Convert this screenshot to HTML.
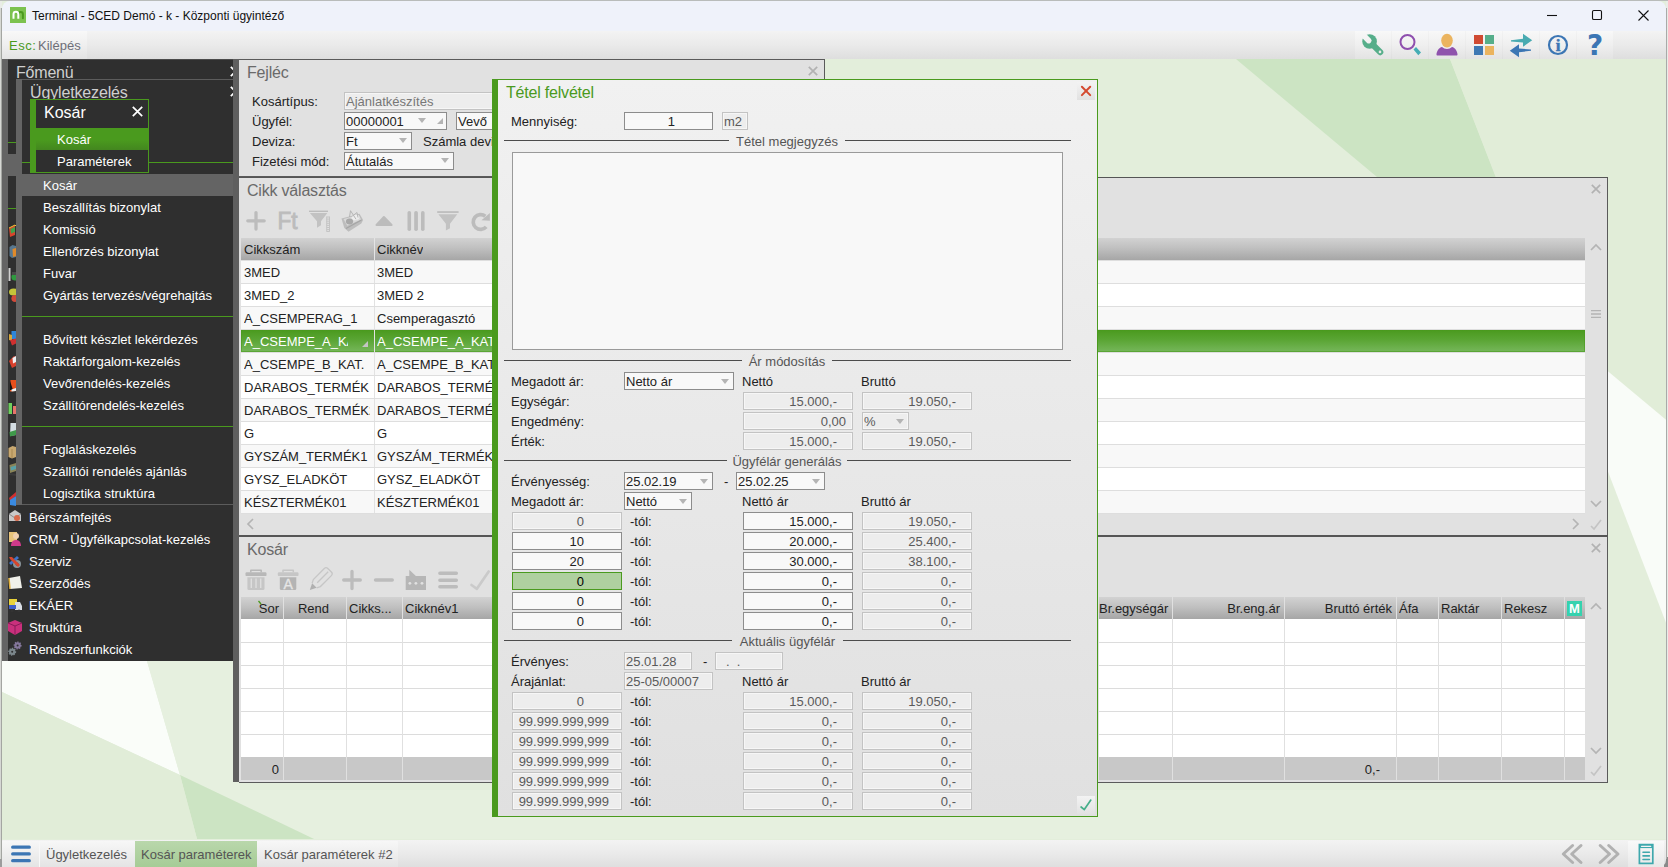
<!DOCTYPE html>
<html lang="hu"><head><meta charset="utf-8"><title>Terminal - 5CED Demó</title>
<style>
html,body{margin:0;padding:0}
body{width:1668px;height:867px;position:relative;overflow:hidden;background:#e9ece7;font-family:"Liberation Sans",sans-serif;font-size:13px;color:#222;}
div,span{box-sizing:border-box}
.a{position:absolute}
.t{position:absolute;white-space:nowrap;height:20px;line-height:20px}
.title{position:absolute;left:2px;top:1px;width:1664px;height:30px;background:#eff2fa;border-radius:8px 8px 0 0}
.tbar{position:absolute;left:2px;top:31px;width:1664px;height:28px;background:linear-gradient(#f3f3f3,#eaeaea 50%,#dedede)}
.bbar{position:absolute;left:2px;top:840px;width:1664px;height:27px;border-radius:0 0 7px 7px;background:linear-gradient(#f3f3f3,#eaeaea 50%,#dfdfdf)}
.menu{position:absolute;background:#2f2f2f}
.mi{position:absolute;white-space:nowrap;color:#fff;height:22px;line-height:24px;font-size:13px}
.panel{position:absolute;background:#e1e1e1}
.ph{position:absolute;letter-spacing:-0.2px;font-size:16px;color:#6a6a6a;white-space:nowrap;height:20px;line-height:20px}
.f{position:absolute;height:18px;line-height:18px;white-space:nowrap;overflow:hidden;font-size:13px}
.fe{background:#f8f8f8;border:1px solid #8c8c8c;color:#222}
.fd{background:#ededed;border:1px solid #c3c3c3;color:#5a5a5a;box-shadow:inset 0 0 0 1px #f6f6f6}
.fa{background:#afd09f;border:1px solid #4a9a1e;color:#000}
.r{text-align:right}
.arr{position:absolute;width:0;height:0;margin-left:-0.5px;border-left:4.5px solid transparent;border-right:4.5px solid transparent;border-top:5px solid #b4b4b4}
.th{position:absolute;height:22px;line-height:22px;white-space:nowrap;overflow:hidden;color:#222;font-size:13px}
.sep{position:absolute;height:1px;background:#4c4c4c}
.sl{position:absolute;white-space:nowrap;height:20px;line-height:20px;color:#555;font-size:13px;text-align:center}
</style></head>
<body>
<div class="a" style="left:0;top:0;width:1668px;height:1px;background:#b9bcba"></div>
<svg class="a" style="left:2px;top:1px" width="1664" height="866" viewBox="2 1 1664 866">
<rect x="0" y="0" width="1668" height="867" fill="#e3eedb"/>
<polygon points="1236,59 1450,59 1496,177 1377,177" fill="#cce4c3"/>
<polygon points="1450,59 1668,59 1668,622" fill="#e1edd8"/>
<polygon points="1607,370.500 1668,421.500 1668,628 1607,469" fill="#f9fcf8"/>
<polygon points="2,661 147,661 180,775 2,692" fill="#fafdf9"/>
<polygon points="147,661 240,661 240,790 1668,790 1668,839 314,839 180,775" fill="#e6f0df"/>
<polygon points="180,775 314,839 197,839" fill="#cce4c3"/>
<polygon points="2,692 180,775 197,839 2,839" fill="#e1edd8"/>
</svg>
<div class="a" style="left:0;top:857px;width:12px;height:10px;background:#9c9c9c"></div><div class="a" style="left:1656px;top:857px;width:12px;height:10px;background:#8a8a8a"></div>
<div class="title">
<svg class="a" style="left:8px;top:6px" width="16" height="16" viewBox="0 0 16 16"><rect width="16" height="16" fill="#7cc24f"/><path d="M8.300 7.400a2.300 2.300 0 0 1 4.600 0V11.300" fill="none" stroke="#4a9a1e" stroke-width="2" stroke-linecap="round"/><path d="M3.500 11.800V7.200a2.400 2.400 0 0 1 4.800 0V11.800" fill="none" stroke="#fff" stroke-width="2"/></svg>
<div class="a" id="ttl" style="left:30px;top:6px;height:18px;line-height:18px;font-size:12px;color:#111;white-space:nowrap;letter-spacing:0px">Terminal - 5CED Demó - k - Központi ügyintéző</div>
<svg class="a" style="left:1540px;top:0" width="124" height="30" viewBox="1542 1 124 30" fill="none" stroke="#111" stroke-width="1.1"><path d="M1547 15.500h10"/><rect x="1592.5" y="10.5" width="9" height="9" rx="1.3"/><path d="M1638.5 10.5l10 10M1648.5 10.5l-10 10"/></svg>
</div>
<div class="tbar">
<div class="a" style="left:0;top:0;width:85px;height:28px;background:linear-gradient(#f8f8f8,#efefef 50%,#e3e3e3)"></div>
<div class="a" style="left:7px;top:5px;height:20px;line-height:20px;font-size:13px;letter-spacing:0.5px;color:#4a9a1e;white-space:nowrap">Esc:</div>
<div class="a" style="left:36px;top:5px;height:20px;line-height:20px;font-size:13px;color:#6e6e78;white-space:nowrap">Kilépés</div>
<div class="a" style="left:1353px;top:0;width:36px;height:28px;background:linear-gradient(#f8f8f8,#efefef 50%,#e3e3e3)"></div>
<div class="a" style="left:1390px;top:0;width:36px;height:28px;background:linear-gradient(#f8f8f8,#efefef 50%,#e3e3e3)"></div>
<div class="a" style="left:1427px;top:0;width:36px;height:28px;background:linear-gradient(#f8f8f8,#efefef 50%,#e3e3e3)"></div>
<div class="a" style="left:1464px;top:0;width:36px;height:28px;background:linear-gradient(#f8f8f8,#efefef 50%,#e3e3e3)"></div>
<div class="a" style="left:1501px;top:0;width:36px;height:28px;background:linear-gradient(#f8f8f8,#efefef 50%,#e3e3e3)"></div>
<div class="a" style="left:1538px;top:0;width:36px;height:28px;background:linear-gradient(#f8f8f8,#efefef 50%,#e3e3e3)"></div>
<div class="a" style="left:1575px;top:0;width:36px;height:28px;background:linear-gradient(#f8f8f8,#efefef 50%,#e3e3e3)"></div>
<svg class="a" style="left:1353px;top:0" width="260" height="28" viewBox="1355 31 260 28">
<mask id="wm" maskUnits="userSpaceOnUse" x="1355" y="31" width="40" height="28"><rect x="1355" y="31" width="40" height="28" fill="#fff"/><rect x="-2.800" y="-12" width="5.600" height="13.500" rx="2.600" transform="translate(1369.600 41.500) rotate(-45)" fill="#000"/><circle cx="1380" cy="51.900" r="1.300" fill="#000"/></mask>
<g mask="url(#wm)" fill="#56ae8a" stroke="#56ae8a"><circle cx="1369.600" cy="41.500" r="7.300" stroke="none"/><path d="M1370.500 42.400L1380.200 52.100" stroke-width="6.200" stroke-linecap="round"/></g>
<circle cx="1407.500" cy="42" r="7" fill="none" stroke="#8f4fae" stroke-width="2"/>
<path d="M1413.500 49.500l2.500-2.500 5 5.500-2.700 2.700z" fill="#45adb5"/>
<ellipse cx="1447" cy="40.600" rx="5.800" ry="6.800" fill="#ebb45f"/>
<path d="M1436.500 54.500c0-3 2.500-7 5.500-7.500 1.500 1.200 3 2 5 2s3.500-.8 5-2c3 .5 5.500 4.500 5.500 7.500 0 .6-.4 1-1 1h-19c-.6 0-1-.4-1-1z" fill="#8f52ad"/>
<rect x="1474" y="35" width="9" height="9" fill="#d04a31"/><rect x="1485" y="35" width="9" height="9" fill="#56ae8a"/><rect x="1474" y="46" width="9" height="9" fill="#3e78b3"/><rect x="1485" y="46" width="9" height="9" fill="#ebb45f"/>
<path d="M1511 40.200l12-1.400v-5l9.200 6.500-9.200 6.500v-4.200l-12 -1.200z" fill="#49abb1"/>
<path d="M1531 50.800l-12 1.400v5l-9.200-6.500 9.200-6.500v4.200l12 1.200z" fill="#3c76b4"/>
<circle cx="1558" cy="45" r="9" fill="none" stroke="#3c76b4" stroke-width="2.200"/>
<text x="1558" y="51" font-family="Liberation Serif,serif" font-weight="bold" font-size="17" fill="#3c76b4" stroke="#3c76b4" stroke-width="0.5" text-anchor="middle">i</text>
<text x="1595" y="55" font-family="DejaVu Sans,Liberation Sans,sans-serif" font-weight="bold" font-size="28" fill="#3c76b4" text-anchor="middle">?</text>
</svg>
</div>
<div class="bbar">
<div class="a" style="left:0;top:1px;width:396px;height:26px;background:linear-gradient(#f7f7f7,#eeeeee 50%,#e4e4e4)"></div>
<svg class="a" style="left:8px;top:5px" width="22" height="18" viewBox="0 0 22 18" stroke="#3c76b4" stroke-width="3.300" stroke-linecap="round"><path d="M2.700 2.200h16.600M2.700 8.900h16.600M2.700 15.700h16.600"/></svg>
<div class="a" style="left:37px;top:1px;width:1px;height:26px;background:#f8f8f8"></div>
<div class="a" style="left:133px;top:1px;width:122px;height:26px;background:linear-gradient(#b9d7ab,#a6cc96)"></div>
<div class="a" style="left:44px;top:5px;height:20px;line-height:20px;font-size:13px;color:#555;white-space:nowrap">Ügyletkezelés</div>
<div class="a" style="left:139px;top:5px;height:20px;line-height:20px;font-size:13px;color:#555;white-space:nowrap">Kosár paraméterek</div>
<div class="a" style="left:262px;top:5px;height:20px;line-height:20px;font-size:13px;color:#555;white-space:nowrap">Kosár paraméterek #2</div>
<div class="a" style="left:1626px;top:1px;width:36px;height:26px;background:linear-gradient(#f9f9f9,#f1f1f1 50%,#e8e8e8)"></div>
<svg class="a" style="left:1555px;top:-1px" width="109" height="28" viewBox="1557 839 109 28" fill="none"><g stroke="#b1b1b1" stroke-width="3" stroke-linecap="round" stroke-linejoin="round"><path d="M1572.600 845.500l-9.300 8.500 9.300 8.500M1581 845.500l-9.300 8.500 9.300 8.500"/><path d="M1600.200 845.500l9.300 8.500-9.300 8.500M1608.700 845.500l9.300 8.500-9.300 8.500"/></g><g stroke="#3fa8ad"><rect x="1639.400" y="844.600" width="13.400" height="18.800" stroke-width="1.700"/><path d="M1639.400 846.300h13.400" stroke-width="3.600"/><path d="M1641.500 846.300h9.200" stroke="#f4f4f4" stroke-width="1.300" stroke-linecap="round"/><path d="M1643 852.300h6.400M1643 855.900h6.400M1643 859.500h6.400" stroke-width="1.600" stroke-linecap="round"/></g></svg>
</div>
<div class="menu" style="left:2px;top:59px;width:231px;height:602px;overflow:hidden">
<div class="a" style="left:0;top:0;width:231px;height:1px;background:#4a4a4a"></div>
<div class="a" style="left:0;top:0;width:6px;height:602px;background:#646464"></div>
<div class="a" style="left:0;top:95px;width:231px;height:22px;background:#646464"></div>
<div class="a" style="left:6px;top:83px;width:225px;height:1px;background:#4a9a1e"></div>
<div class="a" style="left:6px;top:149px;width:225px;height:1px;background:#4a9a1e"></div>
<div class="a" style="left:14px;top:4px;height:20px;line-height:20px;font-size:16px;letter-spacing:-0.2px;color:#cfcfcf;white-space:nowrap">Főmenü</div>
<svg class="a" style="left:228px;top:7px" width="11" height="11" viewBox="0 0 11 11"><path d="M0.8 0.8L10.2 10.2M10.2 0.8L0.800 10.2" stroke="#ffffff" stroke-width="1.7" fill="none"/></svg>
<svg class="a" style="left:6px;top:162px" width="8" height="290" viewBox="8 220 8 290">
<g><path d="M9 227l6-3v10l-5 2z" fill="#d8452c"/><path d="M10.500 228l4.500-2v5l-4 1.500z" fill="#3fa24a"/><path d="M9 227l6-3 1 1" stroke="#e8c83a" fill="none"/></g>
<g><path d="M9.500 246l3-2 3.500 1v11l-4 1-2.500-2z" fill="#587890"/><path d="M12.500 248l3.500-1v8l-3 1z" fill="#e08a2a"/></g>
<g><rect x="8.500" y="267" width="2" height="13" fill="#cfcfcf"/><circle cx="15" cy="276" r="3.600" fill="#2f9a3f"/><path d="M12 271h4v3h-4z" fill="#4a4a4a"/></g>
<g><ellipse cx="13.500" cy="291" rx="4.500" ry="3.600" fill="#c4c43a"/><ellipse cx="15" cy="297.500" rx="3.600" ry="3.400" fill="#d24a3a"/></g>
<g><rect x="11.500" y="330" width="4.500" height="8" fill="#2f86d8"/><path d="M9 333l3 1v6l-3-1z" fill="#d8a83a"/><path d="M10 339l6-1.500v5l-4 2z" fill="#d03030"/></g>
<g><path d="M9 360l5-5 2 1v9l-4 2z" fill="#d8402c"/><path d="M12.500 357l3.500-2v6l-3 1.500z" fill="#f0f0f4"/></g>
<g><path d="M10.500 379h5.500v11l-6 .5z" fill="#e8501c"/><path d="M10 380l3 9h-3z" fill="#111"/><path d="M11.500 388.500l4.500-1.500v3l-4.500 .5z" fill="#f2f2f2"/></g>
<g><rect x="8.500" y="402" width="3.500" height="11" fill="#6ed05e"/><rect x="13" y="405" width="3" height="8" fill="#e8746a"/></g>
<g><path d="M10.500 422h5.500v12l-6 1z" fill="#d4dde2"/><path d="M9.500 431l6.500-2v5l-6 1.500z" fill="#3f9a4a"/></g>
<g><path d="M8.500 447l4-2 3.500 1v10l-4 1.500-3.500-1.500z" fill="#c8a870"/><path d="M12 448v9" stroke="#a88850"/></g>
<g><path d="M9.500 464l6.500-2v8l-6 2z" fill="#8a8458"/><path d="M10.500 466l5.500-1.500v3.500l-5 1.500z" fill="#58a0a8"/><path d="M9 472l7 1v2l-7-1z" fill="#3a3a3a"/></g>
<g><path d="M9 497l7-6v4l-6 5z" fill="#d03030"/><path d="M10 499l6-4v10l-6 -1z" fill="#3a8ae0"/></g>
</svg>
<div class="mi" style="left:27px;top:447px">Bérszámfejtés</div>
<div class="mi" style="left:27px;top:469px">CRM - Ügyfélkapcsolat-kezelés</div>
<div class="mi" style="left:27px;top:491px">Szerviz</div>
<div class="mi" style="left:27px;top:513px">Szerződés</div>
<div class="mi" style="left:27px;top:535px">EKÁER</div>
<div class="mi" style="left:27px;top:557px">Struktúra</div>
<div class="mi" style="left:27px;top:579px">Rendszerfunkciók</div>
<svg class="a" style="left:6px;top:448px" width="18" height="154" viewBox="8 507 18 154">
<g><path d="M9 514l6-4 6 4v7H9z" fill="#c9c9c9"/><path d="M9 514l6 4 6-4" fill="none" stroke="#8a8a8a"/><circle cx="17" cy="518" r="3" fill="#d8694a"/></g>
<g><rect x="9" y="532" width="8" height="10" fill="#e8c37a"/><circle cx="16" cy="536" r="3" fill="#f0d0b0"/><path d="M11 546c0-4 2-6 5-6s5 2 5 6z" fill="#d03a8a"/></g>
<g><circle cx="17" cy="564" r="4" fill="#8a949a"/><circle cx="17" cy="564" r="1.500" fill="#2f2f2f"/><path d="M9 563l8-7 2 2-8 7z" fill="#3f74c8"/><path d="M9 557l3 0 8 8-2 2-8-8z" fill="#d8452c"/></g>
<g><path d="M9 578l11-2 2 12-12 1z" fill="#f0f0ea"/><path d="M9 578l1 11" stroke="#e0b040" stroke-width="1.500"/></g>
<g><rect x="9" y="599" width="8" height="7" fill="#e8d23a"/><path d="M15 602l5 0 2 4v4h-7z" fill="#d8dde4"/><rect x="9" y="605" width="7" height="4" fill="#3f5fc8"/><circle cx="12" cy="611" r="1.600" fill="#333"/><circle cx="19" cy="611" r="1.600" fill="#333"/></g>
<g><path d="M15 620l7 3v8l-7 4-7-4v-8z" fill="#c9307c"/><path d="M8 623l7 3 7-3M15 626v9" stroke="#8a1a58" fill="none"/></g>
<g><circle cx="17.600" cy="645.400" r="3.200" fill="#85789c" stroke="#85789c" stroke-width="1.600" stroke-dasharray="1.200 1.200"/><circle cx="17.600" cy="645.400" r="1" fill="#2f2f2f"/><circle cx="12.200" cy="651.700" r="3.200" fill="#7c878c" stroke="#7c878c" stroke-width="1.600" stroke-dasharray="1.200 1.200"/><circle cx="12.200" cy="651.700" r="1" fill="#2f2f2f"/></g>
</svg>
<div class="a" style="left:14px;top:20px;width:217px;height:426px;background:#2f2f2f;overflow:hidden">
<div class="a" style="left:0;top:0;width:217px;height:1px;background:#5c5c5c"></div>
<div class="a" style="left:0;top:425px;width:217px;height:1px;background:#5c5c5c"></div>
<div class="a" style="left:0;top:0;width:6px;height:426px;background:#646464"></div>
<div class="a" style="left:14px;top:4px;height:20px;line-height:20px;font-size:16px;letter-spacing:-0.15px;color:#cfcfcf;white-space:nowrap">Ügyletkezelés</div>
<svg class="a" style="left:214px;top:7px" width="11" height="11" viewBox="0 0 11 11"><path d="M0.8 0.8L10.2 10.2M10.2 0.8L0.800 10.2" stroke="#ffffff" stroke-width="1.7" fill="none"/></svg>
<div class="a" style="left:6px;top:83px;width:211px;height:1px;background:#4a9a1e"></div>
<div class="a" style="left:6px;top:237px;width:211px;height:1px;background:#4a9a1e"></div>
<div class="a" style="left:6px;top:347px;width:211px;height:1px;background:#4a9a1e"></div>
<div class="a" style="left:0;top:95px;width:217px;height:22px;background:#646464"></div>
<div class="mi" style="left:27px;top:95px">Kosár</div>
<div class="mi" style="left:27px;top:117px">Beszállítás bizonylat</div>
<div class="mi" style="left:27px;top:139px">Komissió</div>
<div class="mi" style="left:27px;top:161px">Ellenőrzés bizonylat</div>
<div class="mi" style="left:27px;top:183px">Fuvar</div>
<div class="mi" style="left:27px;top:205px">Gyártás tervezés/végrehajtás</div>
<div class="mi" style="left:27px;top:249px">Bővített készlet lekérdezés</div>
<div class="mi" style="left:27px;top:271px">Raktárforgalom-kezelés</div>
<div class="mi" style="left:27px;top:293px">Vevőrendelés-kezelés</div>
<div class="mi" style="left:27px;top:315px">Szállítórendelés-kezelés</div>
<div class="mi" style="left:27px;top:359px">Foglaláskezelés</div>
<div class="mi" style="left:27px;top:381px">Szállítói rendelés ajánlás</div>
<div class="mi" style="left:27px;top:403px">Logisztika struktúra</div>
<div class="a" style="left:14px;top:20px;width:119px;height:74px;background:#2f2f2f;border:1px solid #4a9a1e;overflow:hidden">
<div class="a" style="left:0;top:0;width:5px;height:72px;background:#4a9a1e"></div>
<div class="a" style="left:5px;top:28px;width:112px;height:22px;background:linear-gradient(#4a9a1e,#4a9a1e 55%,#43861f)"></div>
<div class="a" style="left:13px;top:3px;height:20px;line-height:20px;font-size:16px;color:#fff;white-space:nowrap">Kosár</div>
<svg class="a" style="left:101px;top:6px" width="11" height="11" viewBox="0 0 11 11"><path d="M0.8 0.8L10.2 10.2M10.2 0.8L0.800 10.2" stroke="#ffffff" stroke-width="1.7" fill="none"/></svg>
<div class="mi" style="left:26px;top:28px">Kosár</div>
<div class="mi" style="left:26px;top:50px">Paraméterek</div>
</div>
</div>
</div>
<div class="a" style="left:233px;top:59px;width:6px;height:723px;background:#5f5f5f"></div>
<div class="panel" style="left:239px;top:59px;width:586px;height:118px;border-top:1px solid #5a5a5a;border-right:1px solid #5a5a5a;border-bottom:1px solid #5a5a5a"></div>
<div class="ph" style="left:247px;top:63px">Fejléc</div>
<svg class="a" style="left:808px;top:66px" width="10" height="10" viewBox="0 0 10 10"><path d="M0.8 0.8L9.2 9.2M9.2 0.8L0.800 9.2" stroke="#b2b2b2" stroke-width="1.7" fill="none"/></svg>
<div class="t" style="left:252px;top:92px">Kosártípus:</div>
<div class="t" style="left:252px;top:112px">Ügyfél:</div>
<div class="t" style="left:252px;top:132px">Deviza:</div>
<div class="t" style="left:252px;top:152px">Fizetési mód:</div>
<div class="f fd" style="left:344px;top:92px;width:200px;padding-left:1px;color:#777">Ajánlatkészítés</div>
<div class="f fe" style="left:344px;top:112px;width:103px;padding-left:1px">00000001</div>
<div class="arr" style="left:418px;top:118px;border-top-color:#b4b4b4"></div>
<svg class="a" style="left:437px;top:118px" width="6" height="6"><path d="M6 0V6H0z" fill="#b4b4b4"/></svg>
<div class="f fe" style="left:456px;top:112px;width:60px;padding-left:1px">Vevő</div>
<div class="f fe" style="left:344px;top:132px;width:68px;padding-left:1px">Ft</div>
<div class="arr" style="left:399px;top:138px;border-top-color:#b4b4b4"></div>
<div class="t" style="left:423px;top:132px">Számla deviza</div>
<div class="f fe" style="left:344px;top:152px;width:110px;padding-left:1px">Átutalás</div>
<div class="arr" style="left:441px;top:158px;border-top-color:#b4b4b4"></div>
<div class="panel" style="left:239px;top:177px;width:1369px;height:358px;border-top:1px solid #555;border-right:1px solid #5a5a5a"></div>
<div class="ph" style="left:247px;top:181px">Cikk választás</div>
<svg class="a" style="left:1591px;top:184px" width="10" height="10" viewBox="0 0 10 10"><path d="M0.8 0.8L9.2 9.2M9.2 0.8L0.800 9.2" stroke="#b2b2b2" stroke-width="1.7" fill="none"/></svg>
<svg class="a" style="left:241px;top:206px" width="251" height="28" viewBox="241 206 251 28" fill="#bcbcbc" stroke="none">
<path d="M256 212.600v16.400M247.800 220.800h16.400" stroke="#bcbcbc" stroke-width="3.300" stroke-linecap="round" fill="none"/>
<text x="277.500" y="229" font-family="Liberation Sans,sans-serif" font-size="23" fill="#bcbcbc" stroke="#bcbcbc" stroke-width="0.900" textLength="20" lengthAdjust="spacingAndGlyphs">Ft</text>
<rect x="309" y="210.600" width="19" height="1.400"/>
<path d="M309.900 213h17.400l-6.300 8.300v4l-4 2.500v-6.500z" fill="#c2c2c2"/>
<path d="M326.700 216.500v15.200M329.500 216.500v15.200M326.700 217h2.800M326.700 219.100h2.800M326.700 221.200h2.800M326.700 223.300h2.800M326.700 225.400h2.800M326.700 227.500h2.800M326.700 229.600h2.800M326.700 231.500h2.800" stroke="#c4c4c4" stroke-width="1" fill="none"/>
<path d="M341.500 218.500l18-4.800 3.600 6.200-1.800 3.600-12.800 8.200-4.200-3.600z" fill="#bdbdbd"/>
<path d="M343.500 219l15-4 2.600 4.600-13.800 6.200z" fill="#d9d9d9"/>
<ellipse cx="355.500" cy="217.500" rx="4" ry="2.600" fill="#ededed" transform="rotate(-15 355.500 217.500)"/>
<ellipse cx="349.500" cy="221.500" rx="3.600" ry="3" fill="#a9a9a9"/>
<path d="M349.500 217l1-6.300 5.500 8.500M352.500 216l4.500-3.500 1 5" fill="none" stroke="#b5b5b5" stroke-width="1"/>
<path d="M346 228.500l15.500-8.500" stroke="#a5a5a5" stroke-width="1.200" fill="none"/>
<path d="M376.500 225l7.400-8 7.700 8z" stroke="#bcbcbc" stroke-width="2" stroke-linejoin="round"/>
<rect x="407.500" y="210.900" width="3.600" height="20.100" rx="1.800"/><rect x="414.200" y="210.900" width="3.700" height="20.100" rx="1.800"/><rect x="421" y="210.900" width="3.600" height="20.100" rx="1.800"/>
<rect x="437.200" y="211.200" width="21.400" height="1.700"/>
<path d="M438.400 214.200h18.900l-7.300 9.600v4.500l-4.100 2.100v-6.600z" fill="#c2c2c2"/>
<path d="M485.300 216.300a7.400 7.400 0 1 0 0.900 10.600" fill="none" stroke="#bcbcbc" stroke-width="3.700"/>
<path d="M489.900 213v7.800l-8.400 -.6z"/>
</svg>
<div class="a" style="left:241px;top:238px;width:1344px;height:22px;background:linear-gradient(#d2d2d2,#c0c0c0 45%,#a6a6a6)"></div>
<div class="a" style="left:374px;top:238px;width:1px;height:22px;background:#e4e4e4"></div>
<div class="th" style="left:244px;top:238px;line-height:24px">Cikkszám</div>
<div class="th" style="left:377px;top:238px;line-height:24px">Cikknév</div>
<div class="a" style="left:241px;top:260px;width:1344px;height:23px;background:#f8f8f8;border-top:1px solid #dedede"></div>
<div class="a" style="left:374px;top:261px;width:1px;height:22px;background:#e2e2e2"></div>
<div class="th" style="left:244px;top:261px;width:126px;color:#222;height:22px;line-height:23px">3MED</div>
<div class="th" style="left:377px;top:261px;width:200px;color:#222;height:22px;line-height:23px">3MED</div>
<div class="a" style="left:241px;top:283px;width:1344px;height:23px;background:#ffffff;border-top:1px solid #dedede"></div>
<div class="a" style="left:374px;top:284px;width:1px;height:22px;background:#e2e2e2"></div>
<div class="th" style="left:244px;top:284px;width:126px;color:#222;height:22px;line-height:23px">3MED_2</div>
<div class="th" style="left:377px;top:284px;width:200px;color:#222;height:22px;line-height:23px">3MED 2</div>
<div class="a" style="left:241px;top:306px;width:1344px;height:23px;background:#f8f8f8;border-top:1px solid #dedede"></div>
<div class="a" style="left:374px;top:307px;width:1px;height:22px;background:#e2e2e2"></div>
<div class="th" style="left:244px;top:307px;width:126px;color:#222;height:22px;line-height:23px">A_CSEMPERAG_1</div>
<div class="th" style="left:377px;top:307px;width:200px;color:#222;height:22px;line-height:23px">Csemperagasztó</div>
<div class="a" style="left:241px;top:329px;width:1344px;height:23px;background:#ffffff;border-top:1px solid #dedede"></div>
<div class="a" style="left:241px;top:330px;width:1344px;height:22px;background:linear-gradient(#4a9a1e,#5aa534 45%,#76b75b);box-shadow:inset 0 0 0 1px rgba(74,154,30,.6)"></div>
<div class="a" style="left:374px;top:330px;width:1px;height:22px;background:#e2e2e2"></div>
<div class="th" style="left:244px;top:330px;width:104px;color:#fff;height:22px;line-height:23px">A_CSEMPE_A_KAT.</div>
<div class="th" style="left:377px;top:330px;width:200px;color:#fff;height:22px;line-height:23px">A_CSEMPE_A_KAT.</div>
<div class="a" style="left:241px;top:352px;width:1344px;height:23px;background:#f8f8f8;border-top:1px solid #dedede"></div>
<div class="a" style="left:374px;top:353px;width:1px;height:22px;background:#e2e2e2"></div>
<div class="th" style="left:244px;top:353px;width:126px;color:#222;height:22px;line-height:23px">A_CSEMPE_B_KAT.</div>
<div class="th" style="left:377px;top:353px;width:200px;color:#222;height:22px;line-height:23px">A_CSEMPE_B_KAT.</div>
<div class="a" style="left:241px;top:375px;width:1344px;height:23px;background:#ffffff;border-top:1px solid #dedede"></div>
<div class="a" style="left:374px;top:376px;width:1px;height:22px;background:#e2e2e2"></div>
<div class="th" style="left:244px;top:376px;width:126px;color:#222;height:22px;line-height:23px">DARABOS_TERMÉK</div>
<div class="th" style="left:377px;top:376px;width:200px;color:#222;height:22px;line-height:23px">DARABOS_TERMÉK</div>
<div class="a" style="left:241px;top:398px;width:1344px;height:23px;background:#f8f8f8;border-top:1px solid #dedede"></div>
<div class="a" style="left:374px;top:399px;width:1px;height:22px;background:#e2e2e2"></div>
<div class="th" style="left:244px;top:399px;width:126px;color:#222;height:22px;line-height:23px">DARABOS_TERMÉK2</div>
<div class="th" style="left:377px;top:399px;width:200px;color:#222;height:22px;line-height:23px">DARABOS_TERMÉK2</div>
<div class="a" style="left:241px;top:421px;width:1344px;height:23px;background:#ffffff;border-top:1px solid #dedede"></div>
<div class="a" style="left:374px;top:422px;width:1px;height:22px;background:#e2e2e2"></div>
<div class="th" style="left:244px;top:422px;width:126px;color:#222;height:22px;line-height:23px">G</div>
<div class="th" style="left:377px;top:422px;width:200px;color:#222;height:22px;line-height:23px">G</div>
<div class="a" style="left:241px;top:444px;width:1344px;height:23px;background:#f8f8f8;border-top:1px solid #dedede"></div>
<div class="a" style="left:374px;top:445px;width:1px;height:22px;background:#e2e2e2"></div>
<div class="th" style="left:244px;top:445px;width:126px;color:#222;height:22px;line-height:23px">GYSZÁM_TERMÉK1</div>
<div class="th" style="left:377px;top:445px;width:200px;color:#222;height:22px;line-height:23px">GYSZÁM_TERMÉK1</div>
<div class="a" style="left:241px;top:467px;width:1344px;height:23px;background:#ffffff;border-top:1px solid #dedede"></div>
<div class="a" style="left:374px;top:468px;width:1px;height:22px;background:#e2e2e2"></div>
<div class="th" style="left:244px;top:468px;width:126px;color:#222;height:22px;line-height:23px">GYSZ_ELADKÖT</div>
<div class="th" style="left:377px;top:468px;width:200px;color:#222;height:22px;line-height:23px">GYSZ_ELADKÖT</div>
<div class="a" style="left:241px;top:490px;width:1344px;height:23px;background:#f8f8f8;border-top:1px solid #dedede"></div>
<div class="a" style="left:374px;top:491px;width:1px;height:22px;background:#e2e2e2"></div>
<div class="th" style="left:244px;top:491px;width:126px;color:#222;height:22px;line-height:23px">KÉSZTERMÉK01</div>
<div class="th" style="left:377px;top:491px;width:200px;color:#222;height:22px;line-height:23px">KÉSZTERMÉK01</div>
<div class="a" style="left:241px;top:513px;width:1344px;height:1px;background:#dedede"></div>
<svg class="a" style="left:362px;top:341px" width="6" height="6"><path d="M6 0V6H0z" fill="#c4c4c4"/></svg>
<svg class="a" style="left:1585px;top:238px" width="22" height="296" viewBox="1585 238 22 296" fill="none" stroke="#b4b4b4" stroke-width="1.700"><path d="M1591 250l5-5 5 5"/><path d="M1591 310.600h10M1591 314h10M1591 317.400h10" stroke-width="1.400"/><path d="M1591 501l5 5 5-5"/><path d="M1591 526l3 3 7-9" stroke="#c4c4c4"/></svg>
<svg class="a" style="left:241px;top:514px" width="1344" height="20" viewBox="241 514 1344 20" fill="none" stroke="#b4b4b4" stroke-width="1.700"><path d="M253 519l-5 5 5 5"/><path d="M1573 519l5 5-5 5"/></svg>
<div class="panel" style="left:239px;top:535px;width:1369px;height:248px;border-top:2px solid #555;border-right:1px solid #5a5a5a;border-bottom:1px solid #5a5a5a"></div>
<div class="ph" style="left:247px;top:540px">Kosár</div>
<svg class="a" style="left:1591px;top:543px" width="10" height="10" viewBox="0 0 10 10"><path d="M0.8 0.8L9.2 9.2M9.2 0.8L0.800 9.2" stroke="#b2b2b2" stroke-width="1.7" fill="none"/></svg>
<svg class="a" style="left:241px;top:566px" width="251" height="28" viewBox="241 566 251 28" fill="#bcbcbc" stroke="none">
<rect x="245.500" y="572.200" width="21" height="3.900" rx="1.200" fill="#b8b8b8"/><path d="M250.800 572.200v-2h10.400v2" fill="none" stroke="#b8b8b8" stroke-width="1.500" stroke-linejoin="round"/>
<path d="M247.400 577.200h17.100v11.400a1.500 1.500 0 0 1 -1.500 1.500h-14.100a1.500 1.500 0 0 1 -1.500 -1.500z" fill="#c6c6c6"/>
<path d="M251.300 578.500v9.600M256 578.500v9.600M260.700 578.500v9.600" stroke="#dedede" stroke-width="1.400"/>
<rect x="277.800" y="572.200" width="20.700" height="3.900" rx="1.200" fill="#c6c6c6"/><path d="M283 572.200v-2h10.300v2" fill="none" stroke="#c6c6c6" stroke-width="1.500" stroke-linejoin="round"/>
<path d="M279.800 577.200h16.500v11.400a1.500 1.500 0 0 1 -1.500 1.500h-13.500a1.500 1.500 0 0 1 -1.500 -1.500z" fill="#b4b4b4"/>
<text x="288.100" y="589.300" font-family="Liberation Sans,sans-serif" font-size="14" fill="#e6e6e6" stroke="#e6e6e6" stroke-width="0.300" text-anchor="middle">A</text>
<g transform="translate(309.800 590.100) rotate(-45)"><path d="M0 0l6.500-3.200v6.400z" fill="#b0b0b0"/><path d="M6.500 -3.200l3.500-1.800h15.500a2.500 2.500 0 0 1 2.500 2.500v5a2.500 2.500 0 0 1 -2.500 2.500h-15.500l-3.500-1.800M10.500 0h15.500" fill="none" stroke="#c6c6c6" stroke-width="1.300"/></g>
<path d="M352 571.400v17.200M343.700 580h16.600" stroke="#bcbcbc" stroke-width="3.300" stroke-linecap="round" fill="none"/>
<path d="M375.600 580h16.600" stroke="#bcbcbc" stroke-width="3.600" stroke-linecap="round" fill="none"/>
<path d="M405.700 576.100h3.600v-6.300l6.600 6.300h10.100v14h-20.300z" fill="#b6b6b6"/><circle cx="409.900" cy="583.300" r="1.400" fill="#e1e1e1"/><circle cx="415.900" cy="583.300" r="1.400" fill="#e1e1e1"/><circle cx="422" cy="583.300" r="1.400" fill="#e1e1e1"/>
<path d="M439.900 573.200h16.400M439.900 580.200h16.400M439.900 586.800h16.400" stroke="#bcbcbc" stroke-width="3.500" stroke-linecap="round" fill="none"/>
<path d="M471.500 585l5.400 3.800 11.800-17.300" fill="none" stroke="#cacaca" stroke-width="2.700" stroke-linecap="round" stroke-linejoin="round"/>
</svg>
<div class="a" style="left:241px;top:597px;width:1344px;height:22px;background:linear-gradient(#d2d2d2,#c0c0c0 45%,#a6a6a6)"></div>
<div class="a" style="left:241px;top:619px;width:1344px;height:138px;background:#fff"></div>
<div class="a" style="left:241px;top:757px;width:1344px;height:23px;background:#c8c8c8"></div>
<div class="a" style="left:241px;top:642px;width:1344px;height:1px;background:#dcdcdc"></div>
<div class="a" style="left:241px;top:665px;width:1344px;height:1px;background:#dcdcdc"></div>
<div class="a" style="left:241px;top:688px;width:1344px;height:1px;background:#dcdcdc"></div>
<div class="a" style="left:241px;top:711px;width:1344px;height:1px;background:#dcdcdc"></div>
<div class="a" style="left:241px;top:734px;width:1344px;height:1px;background:#dcdcdc"></div>
<div class="th" style="left:241px;width:42px;text-align:right;padding-right:4px;top:597px;line-height:24px">Sor</div>
<div class="a" style="left:283px;top:597px;width:1px;height:183px;background:#e0e0e0"></div>
<div class="th" style="left:284px;width:62px;text-align:center;padding-right:3px;top:597px;line-height:24px">Rend</div>
<div class="a" style="left:346px;top:597px;width:1px;height:183px;background:#e0e0e0"></div>
<div class="th" style="left:349px;width:53px;top:597px;line-height:24px">Cikks...</div>
<div class="a" style="left:402px;top:597px;width:1px;height:183px;background:#e0e0e0"></div>
<div class="th" style="left:405px;width:694px;top:597px;line-height:24px">Cikknév1</div>
<div class="a" style="left:1098px;top:597px;width:1px;height:183px;background:#e0e0e0"></div>
<div class="th" style="left:1099px;width:73px;text-align:right;padding-right:4px;top:597px;line-height:24px">Br.egységár</div>
<div class="a" style="left:1172px;top:597px;width:1px;height:183px;background:#e0e0e0"></div>
<div class="th" style="left:1173px;width:111px;text-align:right;padding-right:4px;top:597px;line-height:24px">Br.eng.ár</div>
<div class="a" style="left:1284px;top:597px;width:1px;height:183px;background:#e0e0e0"></div>
<div class="th" style="left:1285px;width:111px;text-align:right;padding-right:4px;top:597px;line-height:24px">Bruttó érték</div>
<div class="a" style="left:1396px;top:597px;width:1px;height:183px;background:#e0e0e0"></div>
<div class="th" style="left:1399px;width:39px;top:597px;line-height:24px">Áfa</div>
<div class="a" style="left:1438px;top:597px;width:1px;height:183px;background:#e0e0e0"></div>
<div class="th" style="left:1441px;width:60px;top:597px;line-height:24px">Raktár</div>
<div class="a" style="left:1501px;top:597px;width:1px;height:183px;background:#e0e0e0"></div>
<div class="th" style="left:1504px;width:60px;top:597px;line-height:24px">Rekesz</div>
<div class="a" style="left:1564px;top:597px;width:1px;height:183px;background:#e0e0e0"></div>
<svg class="a" style="left:258px;top:600px" width="5" height="5"><path d="M0.500 1l2.500 3" stroke="#4a9a1e" stroke-width="1.300"/></svg>
<div class="a" style="left:1567px;top:601px;width:15px;height:15px;background:#35d2ae;color:#fff;font-weight:bold;font-size:13px;line-height:15px;text-align:center">M</div>
<div class="th" style="left:241px;width:42px;text-align:right;padding-right:4px;top:758px;line-height:23px">0</div>
<div class="th" style="left:1285px;width:111px;text-align:right;padding-right:16px;top:758px;line-height:23px">0,-</div>
<svg class="a" style="left:1585px;top:597px" width="22" height="184" viewBox="1585 597 22 184" fill="none" stroke="#b4b4b4" stroke-width="1.700"><path d="M1591 609l5-5 5 5"/><path d="M1591 748l5 5 5-5"/><path d="M1591 772l3 3 7-9" stroke="#c4c4c4"/></svg>
<div class="a" style="left:492px;top:79px;width:606px;height:738px;background:linear-gradient(#f1f1f1,#e0e0e0);border:1px solid #4a9a1e"></div>
<div class="a" style="left:492px;top:79px;width:6px;height:738px;background:#4a9a1e"></div>
<div class="a" style="left:506px;top:83px;height:20px;line-height:20px;font-size:16px;letter-spacing:-0.2px;color:#4a9a1e;white-space:nowrap">Tétel felvétel</div>
<div class="a" style="left:1077px;top:82px;width:18px;height:18px;background:linear-gradient(#f3f3f3,#e1e1e1)"></div>
<svg class="a" style="left:1080px;top:85px" width="12" height="12" viewBox="0 0 12 12"><path d="M1.900 1.800l8.300 8.300M10.200 1.800l-8.300 8.300" stroke="#d4492f" stroke-width="2" stroke-linecap="round" fill="none"/></svg>
<div class="a" style="left:1077px;top:796px;width:18px;height:18px;background:linear-gradient(#f3f3f3,#e2e2e2)"></div>
<svg class="a" style="left:1077px;top:796px" width="18" height="18" viewBox="1077 796 18 18"><path d="M1081.100 807l3.200 2.600 6.500-9.500" fill="none" stroke="#45ae8a" stroke-width="1.700" stroke-linecap="round" stroke-linejoin="round"/></svg>
<div class="t" style="left:511px;top:112px;">Mennyiség:</div>
<div class="f fe" style="left:624px;top:112px;width:89px;text-align:right;padding-right:37px;">1</div>
<div class="f fd" style="left:722px;top:112px;width:26px;padding-left:1px;">m2</div>
<div class="sep" style="left:504px;top:140px;width:225px"></div>
<div class="sep" style="left:845px;top:140px;width:226px"></div>
<div class="sl" style="left:716px;width:142px;top:132px">Tétel megjegyzés</div>
<div class="a" style="left:512px;top:152px;width:551px;height:198px;background:#f8f8f8;border:1px solid #9a9a9a"></div>
<div class="sep" style="left:504px;top:360px;width:238px"></div>
<div class="sep" style="left:832px;top:360px;width:239px"></div>
<div class="sl" style="left:729px;width:116px;top:352px">Ár módosítás</div>
<div class="t" style="left:511px;top:372px;">Megadott ár:</div>
<div class="f fe" style="left:624px;top:372px;width:110px;padding-left:1px;">Netto ár</div>
<div class="arr" style="left:721px;top:379px;border-top-color:#b4b4b4"></div>
<div class="t" style="left:742px;top:372px;">Nettó</div>
<div class="t" style="left:861px;top:372px;">Bruttó</div>
<div class="t" style="left:511px;top:392px;">Egységár:</div>
<div class="f fd" style="left:743px;top:392px;width:110px;text-align:right;padding-right:15px;">15.000,-</div>
<div class="f fd" style="left:862px;top:392px;width:110px;text-align:right;padding-right:15px;">19.050,-</div>
<div class="t" style="left:511px;top:412px;">Engedmény:</div>
<div class="f fd" style="left:743px;top:412px;width:110px;text-align:right;padding-right:6px;">0,00</div>
<div class="f fd" style="left:862px;top:412px;width:47px;padding-left:1px;">%</div>
<div class="arr" style="left:896px;top:419px;border-top-color:#b4b4b4"></div>
<div class="t" style="left:511px;top:432px;">Érték:</div>
<div class="f fd" style="left:743px;top:432px;width:110px;text-align:right;padding-right:15px;">15.000,-</div>
<div class="f fd" style="left:862px;top:432px;width:110px;text-align:right;padding-right:15px;">19.050,-</div>
<div class="sep" style="left:504px;top:460px;width:223px"></div>
<div class="sep" style="left:847px;top:460px;width:224px"></div>
<div class="sl" style="left:714px;width:146px;top:452px">Ügyfélár generálás</div>
<div class="t" style="left:511px;top:472px;">Érvényesség:</div>
<div class="f fe" style="left:624px;top:472px;width:89px;padding-left:1px;">25.02.19</div>
<div class="arr" style="left:700px;top:479px;border-top-color:#b4b4b4"></div>
<div class="t" style="left:724px;top:472px;">-</div>
<div class="f fe" style="left:736px;top:472px;width:89px;padding-left:1px;">25.02.25</div>
<div class="arr" style="left:812px;top:479px;border-top-color:#b4b4b4"></div>
<div class="t" style="left:511px;top:492px;">Megadott ár:</div>
<div class="f fe" style="left:624px;top:492px;width:68px;padding-left:1px;">Nettó</div>
<div class="arr" style="left:679px;top:499px;border-top-color:#b4b4b4"></div>
<div class="t" style="left:742px;top:492px;">Nettó ár</div>
<div class="t" style="left:861px;top:492px;">Bruttó ár</div>
<div class="f fd" style="left:512px;top:512px;width:110px;text-align:right;padding-right:37px;">0</div>
<div class="t" style="left:630px;top:512px;">-tól:</div>
<div class="f fe" style="left:743px;top:512px;width:110px;text-align:right;padding-right:15px;">15.000,-</div>
<div class="f fd" style="left:862px;top:512px;width:110px;text-align:right;padding-right:15px;">19.050,-</div>
<div class="f fe" style="left:512px;top:532px;width:110px;text-align:right;padding-right:37px;">10</div>
<div class="t" style="left:630px;top:532px;">-tól:</div>
<div class="f fe" style="left:743px;top:532px;width:110px;text-align:right;padding-right:15px;">20.000,-</div>
<div class="f fd" style="left:862px;top:532px;width:110px;text-align:right;padding-right:15px;">25.400,-</div>
<div class="f fe" style="left:512px;top:552px;width:110px;text-align:right;padding-right:37px;">20</div>
<div class="t" style="left:630px;top:552px;">-tól:</div>
<div class="f fe" style="left:743px;top:552px;width:110px;text-align:right;padding-right:15px;">30.000,-</div>
<div class="f fd" style="left:862px;top:552px;width:110px;text-align:right;padding-right:15px;">38.100,-</div>
<div class="f fa" style="left:512px;top:572px;width:110px;text-align:right;padding-right:37px;">0</div>
<div class="t" style="left:630px;top:572px;">-tól:</div>
<div class="f fe" style="left:743px;top:572px;width:110px;text-align:right;padding-right:15px;">0,-</div>
<div class="f fd" style="left:862px;top:572px;width:110px;text-align:right;padding-right:15px;">0,-</div>
<div class="f fe" style="left:512px;top:592px;width:110px;text-align:right;padding-right:37px;">0</div>
<div class="t" style="left:630px;top:592px;">-tól:</div>
<div class="f fe" style="left:743px;top:592px;width:110px;text-align:right;padding-right:15px;">0,-</div>
<div class="f fd" style="left:862px;top:592px;width:110px;text-align:right;padding-right:15px;">0,-</div>
<div class="f fe" style="left:512px;top:612px;width:110px;text-align:right;padding-right:37px;">0</div>
<div class="t" style="left:630px;top:612px;">-tól:</div>
<div class="f fe" style="left:743px;top:612px;width:110px;text-align:right;padding-right:15px;">0,-</div>
<div class="f fd" style="left:862px;top:612px;width:110px;text-align:right;padding-right:15px;">0,-</div>
<div class="sep" style="left:504px;top:640px;width:228px"></div>
<div class="sep" style="left:843px;top:640px;width:228px"></div>
<div class="sl" style="left:719px;width:137px;top:632px">Aktuális ügyfélár</div>
<div class="t" style="left:511px;top:652px;">Érvényes:</div>
<div class="f fd" style="left:624px;top:652px;width:68px;padding-left:1px;">25.01.28</div>
<div class="t" style="left:703px;top:652px;">-</div>
<div class="f fd" style="left:715px;top:652px;width:68px;padding-left:10px;">.&nbsp;&nbsp;.</div>
<div class="t" style="left:511px;top:672px;">Árajánlat:</div>
<div class="f fd" style="left:624px;top:672px;width:89px;padding-left:1px;">25-05/00007</div>
<div class="t" style="left:742px;top:672px;">Nettó ár</div>
<div class="t" style="left:861px;top:672px;">Bruttó ár</div>
<div class="f fd" style="left:512px;top:692px;width:110px;text-align:right;padding-right:37px;">0</div>
<div class="t" style="left:630px;top:692px;">-tól:</div>
<div class="f fd" style="left:743px;top:692px;width:110px;text-align:right;padding-right:15px;">15.000,-</div>
<div class="f fd" style="left:862px;top:692px;width:110px;text-align:right;padding-right:15px;">19.050,-</div>
<div class="f fd" style="left:512px;top:712px;width:110px;text-align:right;padding-right:12px;">99.999.999,999</div>
<div class="t" style="left:630px;top:712px;">-tól:</div>
<div class="f fd" style="left:743px;top:712px;width:110px;text-align:right;padding-right:15px;">0,-</div>
<div class="f fd" style="left:862px;top:712px;width:110px;text-align:right;padding-right:15px;">0,-</div>
<div class="f fd" style="left:512px;top:732px;width:110px;text-align:right;padding-right:12px;">99.999.999,999</div>
<div class="t" style="left:630px;top:732px;">-tól:</div>
<div class="f fd" style="left:743px;top:732px;width:110px;text-align:right;padding-right:15px;">0,-</div>
<div class="f fd" style="left:862px;top:732px;width:110px;text-align:right;padding-right:15px;">0,-</div>
<div class="f fd" style="left:512px;top:752px;width:110px;text-align:right;padding-right:12px;">99.999.999,999</div>
<div class="t" style="left:630px;top:752px;">-tól:</div>
<div class="f fd" style="left:743px;top:752px;width:110px;text-align:right;padding-right:15px;">0,-</div>
<div class="f fd" style="left:862px;top:752px;width:110px;text-align:right;padding-right:15px;">0,-</div>
<div class="f fd" style="left:512px;top:772px;width:110px;text-align:right;padding-right:12px;">99.999.999,999</div>
<div class="t" style="left:630px;top:772px;">-tól:</div>
<div class="f fd" style="left:743px;top:772px;width:110px;text-align:right;padding-right:15px;">0,-</div>
<div class="f fd" style="left:862px;top:772px;width:110px;text-align:right;padding-right:15px;">0,-</div>
<div class="f fd" style="left:512px;top:792px;width:110px;text-align:right;padding-right:12px;">99.999.999,999</div>
<div class="t" style="left:630px;top:792px;">-tól:</div>
<div class="f fd" style="left:743px;top:792px;width:110px;text-align:right;padding-right:15px;">0,-</div>
<div class="f fd" style="left:862px;top:792px;width:110px;text-align:right;padding-right:15px;">0,-</div>
<div class="a" style="left:0;top:8px;width:1px;height:851px;background:#d6d8d4"></div><div class="a" style="left:1px;top:8px;width:1px;height:851px;background:#a4a6a2"></div>
<div class="a" style="left:1666px;top:8px;width:1px;height:851px;background:#a9aaa9"></div>
</body></html>
